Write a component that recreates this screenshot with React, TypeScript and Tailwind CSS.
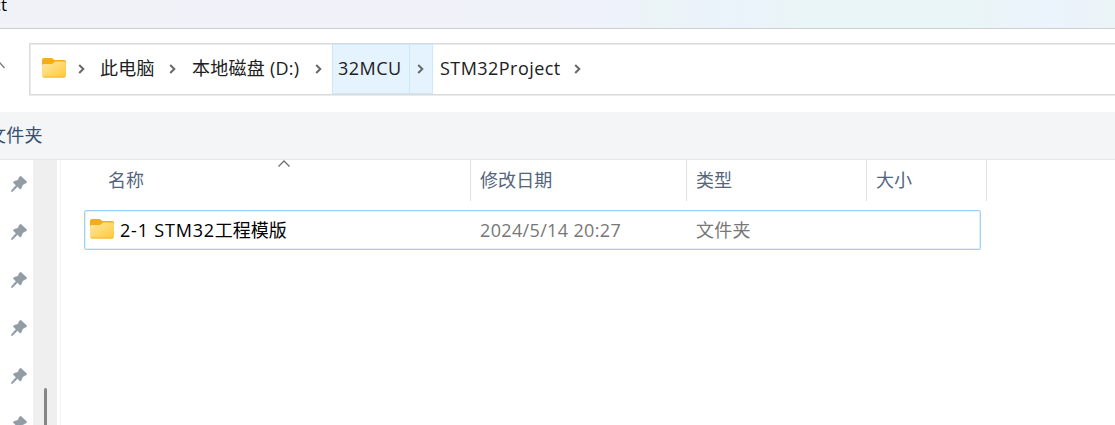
import type { ReactNode } from "react";

function FolderIcon() {
  return (
    <svg width="24" height="20" viewBox="0 0 24 20" className="mb-[3px] block shrink-0">
      <defs>
        <linearGradient id="folder-front" x1="0" y1="0" x2="1" y2="1">
          <stop offset="0" stopColor="#ffe8a3" />
          <stop offset="1" stopColor="#ffc937" />
        </linearGradient>
      </defs>
      <path d="M0 2Q0 0 2 0H9Q10.2 0 11 .8L12.2 2H22Q24 2 24 4V9H0Z" fill="#f2ae14" />
      <path d="M0 8Q0 6 2 6H9.5Q10.5 6 11.2 5.2L12 4.4Q12.6 3.6 13.6 3.6H22Q24 3.6 24 5.5V17.5Q24 19.5 22 19.5H2Q0 19.5 0 17.5Z" fill="url(#folder-front)" />
      <path d="M.6 18.5Q1 19.5 2 19.5H22Q23 19.5 23.5 18.5Z" fill="#f3b62a" />
    </svg>
  );
}

function Chevron() {
  return (
    <svg width="7" height="10" viewBox="0 0 7 10" className="block shrink-0" fill="none" stroke="#686868" strokeWidth="2">
      <path d="M1.2 1L5.3 5L1.2 9" />
    </svg>
  );
}

function Pin() {
  return (
    <svg width="16" height="16" viewBox="0 0 16 16" className="block shrink-0" fill="#929ca4">
      <path d="M8.8 .6Q9.4 0 10.1 .6L15.4 5.4Q16 6.2 15.3 6.8L11.6 8.7L10.1 12.6Q9.5 13.4 8.8 12.8L6.5 10.6L1.5 15.4L.3 15.6L.5 14.4L5.1 9.2L2.7 7Q2.1 6.2 2.9 5.6L6.9 4.2Z" stroke="#929ca4" strokeWidth="0.6" />
    </svg>
  );
}

function Label({ width, tracking, children }: { width: string; tracking?: string; children: ReactNode }) {
  return <span className={`block shrink-0 whitespace-nowrap ${width} ${tracking ?? ""}`}>{children}</span>;
}

function Column({ width, children }: { width: string; children: ReactNode }) {
  return (
    <div className={`h-[41px] shrink-0 border-r border-[#e1e1e1] pl-[9px] leading-[41px] tracking-[0.1px] ${width}`}>{children}</div>
  );
}

export default function App() {
  return (
    <div className="flex h-[425px] w-[1115px] flex-col overflow-hidden bg-white font-['Open_Sans','Noto_Sans_CJK_SC',sans-serif] text-[18px] text-[#202020]">
      <header className="h-[29px] shrink-0 overflow-hidden border-b border-[#cfcfd2] bg-[linear-gradient(90deg,#f0f2f8_0%,#f0f2f9_48%,#eef2fa_56%,#ebf4f6_59%,#ebf3fb_65%,#eaf5f7_72%,#eaf5f7_87%,#ebf3fc_94%,#ebf4f7_100%)]">
        <span className="-ml-[8px] block w-[15px] text-right text-[17px] leading-[10px] text-black">ct</span>
      </header>

      <nav className="flex h-[83px] shrink-0 pt-[14px]">
        <div className="flex w-[29px] shrink-0 pt-[19px]">
          <svg width="5" height="8" viewBox="0 0 5 8" fill="none" stroke="#777" strokeWidth="1.3">
            <path d="M-3 6L0 1L4.5 6" />
          </svg>
        </div>
        <div className="flex h-[52px] flex-1 items-center border-y border-l border-[#dadada] pl-[12px] shadow-[0_1px_0_#ebebeb,inset_1px_1px_0_#ebebeb]">
          <FolderIcon />
          <div className="ml-[12px] flex w-[22px]"><Chevron /></div>
          <Label width="w-[69px] pb-[2px]" tracking="tracking-[0.2px]">此电脑</Label>
          <div className="flex w-[23px]"><Chevron /></div>
          <Label width="w-[123px] pb-[2px]" tracking="tracking-[0.25px]">本地磁盘 (D:)</Label>
          <div className="flex w-[17px]"><Chevron /></div>
          <div className="flex h-[50px] shrink-0 items-center border border-[#cce8ff] bg-[#e5f3ff]">
            <div className="flex h-full w-[77px] items-center border-r border-[#cce8ff] pl-[5px]">
              <Label width="w-[70px] pb-[2px]" tracking="tracking-[0.5px]">32MCU</Label>
            </div>
            <div className="flex w-[22px] pl-[7px]"><Chevron /></div>
          </div>
          <Label width="ml-[7px] w-[134px] pb-[2px]" tracking="tracking-[0.45px]">STM32Project</Label>
          <Chevron />
        </div>
      </nav>

      <div className="h-12 shrink-0 border-b border-[#e6e7e9] bg-[#f4f5f7] leading-[47px] text-[#34506e]">
        <span className="-ml-[12px] block tracking-[0.2px]">文件夹</span>
      </div>

      <main className="flex min-h-0 flex-1">
        <aside className="flex w-[33px] shrink-0 flex-col gap-8 overflow-hidden pt-[16px] pl-[11px]">
          <Pin />
          <Pin />
          <Pin />
          <Pin />
          <Pin />
          <Pin />
        </aside>
        <div className="flex w-[24px] shrink-0 justify-center bg-[#efefef] pt-[228px]">
          <div className="w-[3px] rounded-t-sm bg-[#858585]" />
        </div>
        <div className="w-1 shrink-0 border-r border-[#f6f6f6]" />
        <section className="min-w-0 flex-1 pl-[23px]">
          <div className="flex h-[50px] text-[#53657d]">
            <div className="relative h-[41px] w-[387px] shrink-0 border-r border-[#e1e1e1] pl-[24px] leading-[41px]">
              名称
              <svg width="14" height="8" viewBox="0 0 14 8" fill="none" stroke="#707070" strokeWidth="1.4" className="absolute top-0 left-[193px]">
                <path d="M1.5 6.5L7 1L12.5 6.5" />
              </svg>
            </div>
            <Column width="w-[216px]">修改日期</Column>
            <Column width="w-[180px]">类型</Column>
            <Column width="w-[120px]">大小</Column>
          </div>
          <div className="flex h-10 w-[897px] items-center rounded-xs border border-[#9dd1f8] pl-[5px] text-[#777] shadow-[inset_0_0_0_1px_#e0f1fd]">
            <FolderIcon />
            <Label width="ml-[6px] w-[360px] text-black">
              <span className="tracking-[0.8px]">2-1 STM32</span>工程模版
            </Label>
            <Label width="w-[216px]" tracking="tracking-[0.35px]">2024/5/14 20:27</Label>
            <Label width="w-[150px]" tracking="tracking-[0.2px]">文件夹</Label>
          </div>
        </section>
      </main>
    </div>
  );
}
